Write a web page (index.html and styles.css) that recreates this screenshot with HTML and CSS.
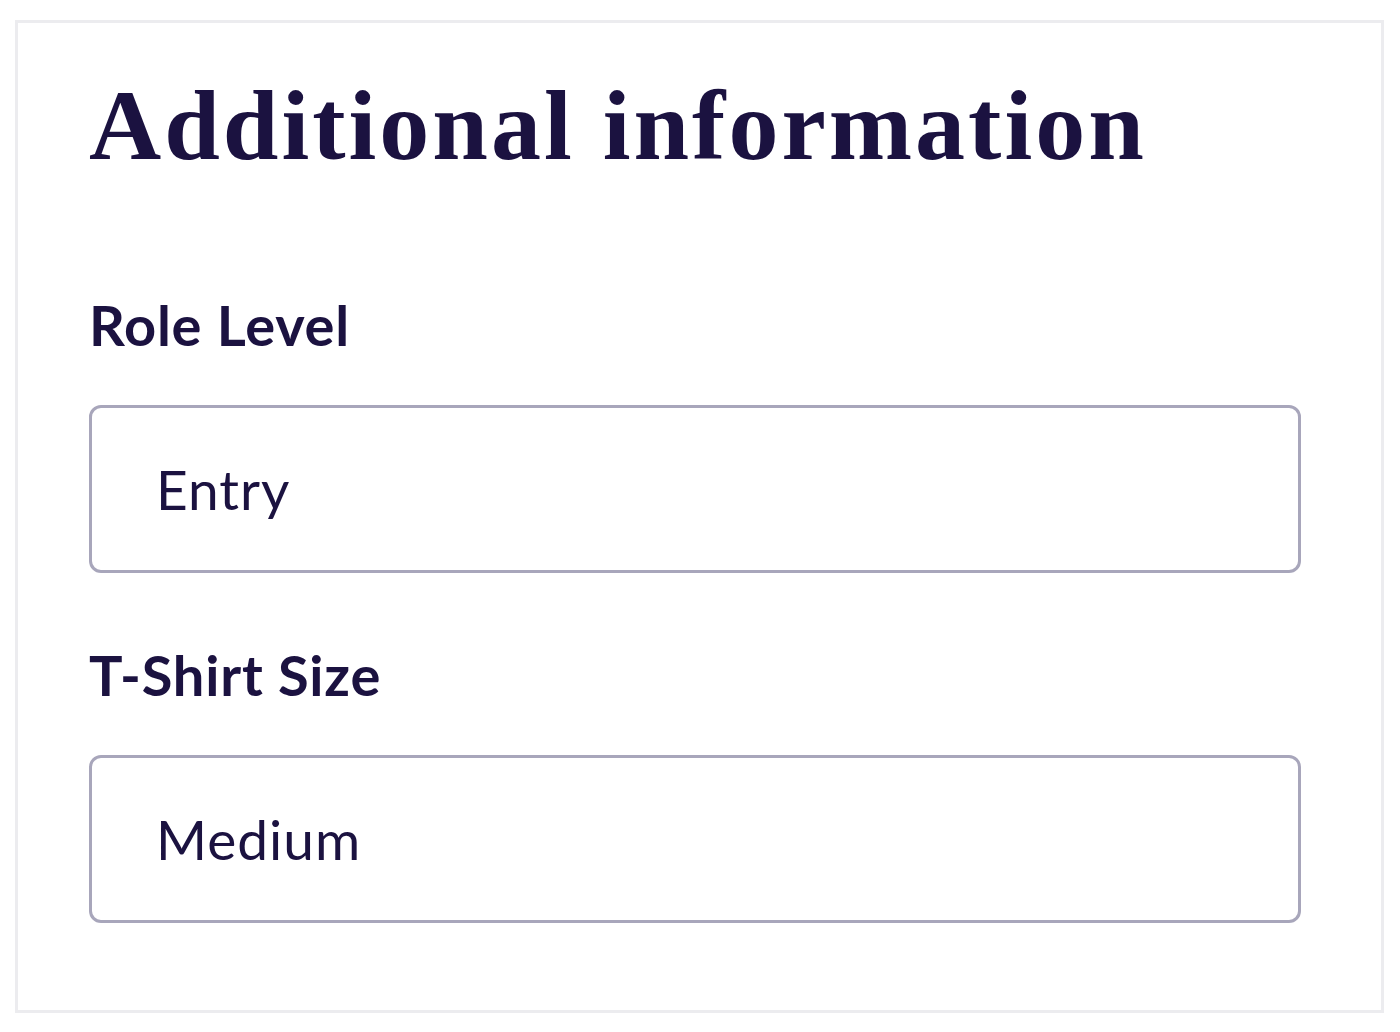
FILE: index.html
```html
<!DOCTYPE html>
<html>
<head>
<meta charset="utf-8">
<link rel="stylesheet" href="styles.css">
</head>
<body>
<section class="card">
  <h1 class="title">Additional information</h1>
  <div class="field">
    <label class="label">Role Level</label>
    <div class="input">Entry</div>
  </div>
  <div class="field">
    <label class="label">T-Shirt Size</label>
    <div class="input">Medium</div>
  </div>
</section>
</body>
</html>
```
FILE: styles.css
```css
html, body {
  margin: 0;
  padding: 0;
  background: #ffffff;
}
body {
  padding: 20px 16px 19px 15px;
  color: #1b1240;
  font-family: Lato, "Open Sans", sans-serif;
}
.card {
  border: 3px solid #ececef;
  height: 987px;
  padding: 0 80px 0 71px;
  box-sizing: content-box;
}
.title {
  margin: 0;
  padding-top: 48px;
  font-family: "Liberation Serif", serif;
  font-weight: 700;
  font-size: 100px;
  line-height: 110px;
  letter-spacing: 3px;
}
.field {
  display: flex;
  flex-direction: column;
}
.label {
  margin-top: 109px;
  font-size: 56px;
  font-weight: 700;
  line-height: 70px;
  letter-spacing: 0.8px;
}
.field + .field .label {
  margin-top: 67px;
}
.input {
  margin-top: 45px;
  height: 162px;
  border: 3px solid #a8a6bb;
  border-radius: 12px;
  padding-left: 64px;
  display: flex;
  align-items: center;
  font-size: 55px;
  line-height: 1;
  letter-spacing: 1px;
}
```
